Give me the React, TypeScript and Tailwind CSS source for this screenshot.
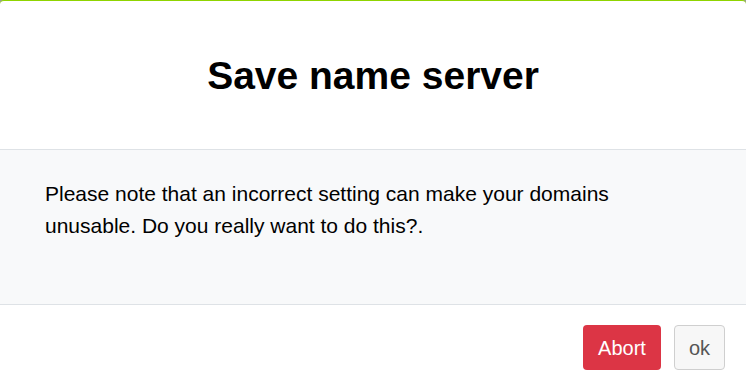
export default function App() {
    return (
        <div className="h-[390px] w-[746px] bg-[#9a9a9a] font-['Liberation_Sans',Arial,sans-serif]">
            <div className="flex h-full flex-col overflow-hidden rounded-t-[4px] border-t border-[#8fd400] bg-white">
                <div className="flex h-[149px] items-center justify-center border-b border-[#dee2e6]">
                    <h1 className="text-[39px] font-bold leading-none text-black">Save name server</h1>
                </div>
                <div className="h-[155px] border-b border-[#dee2e6] bg-[#f8f9fa] px-[45px] pt-[28px]">
                    <p className="text-[21px] leading-[32px] text-black">
                        Please note that an incorrect setting can make your domains unusable. Do you really want to do this?.
                    </p>
                </div>
                <div className="flex flex-1 items-start justify-end gap-[13px] pr-[21px] pt-[20px]">
                    <button className="h-[45px] w-[78px] rounded-[4px] bg-[#dc3545] text-[20px] text-white">Abort</button>
                    <button className="h-[45px] w-[51px] rounded-[4px] border border-[#cfcfcf] bg-[#f7f7f7] text-[20px] text-[#555]">ok</button>
                </div>
            </div>
        </div>
    );
}
